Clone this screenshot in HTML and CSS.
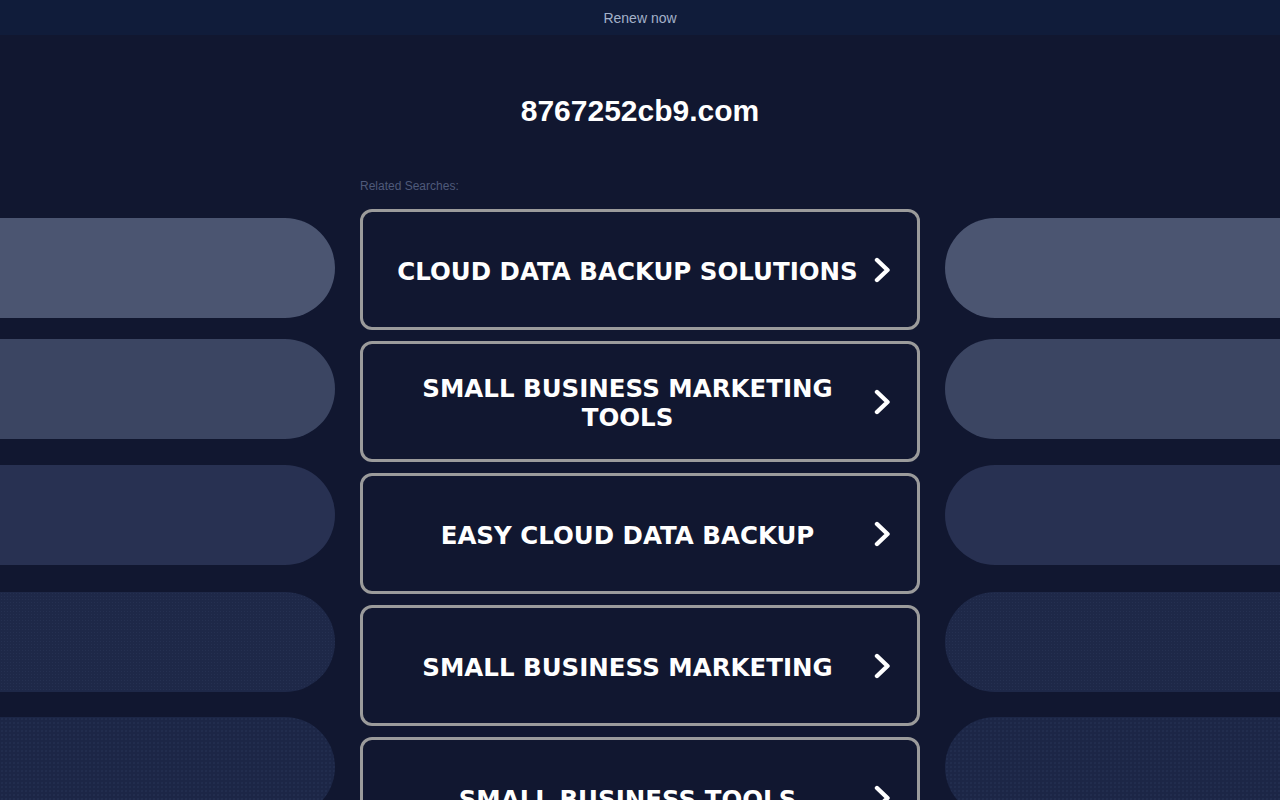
FILE: index.html
```html
<!DOCTYPE html>
<html lang="en">
<head>
<meta charset="utf-8">
<title>8767252cb9.com</title>
<link rel="stylesheet" href="styles.css">
</head>
<body>
<div class="topbar"><a class="renew" href="#">Renew now</a></div>
<h1 class="domain">8767252cb9.com</h1>
<div class="label-row"><span class="label">Related Searches:</span></div>
<div class="layout">
  <div class="side side-left">
    <div class="pill p1"></div>
    <div class="pill p2"></div>
    <div class="pill p3"></div>
    <div class="pill p4"></div>
    <div class="pill p5"></div>
  </div>
  <div class="links">
    <a class="link" href="#"><span class="link-text">CLOUD DATA BACKUP SOLUTIONS</span><svg class="chev" viewBox="0 0 17 26" width="17" height="26"><polyline points="3,3 13.5,13 3,23" fill="none" stroke="#fff" stroke-width="4.4" stroke-linecap="round" stroke-linejoin="round"/></svg></a>
    <a class="link" href="#"><span class="link-text">SMALL BUSINESS MARKETING TOOLS</span><svg class="chev" viewBox="0 0 17 26" width="17" height="26"><polyline points="3,3 13.5,13 3,23" fill="none" stroke="#fff" stroke-width="4.4" stroke-linecap="round" stroke-linejoin="round"/></svg></a>
    <a class="link" href="#"><span class="link-text">EASY CLOUD DATA BACKUP</span><svg class="chev" viewBox="0 0 17 26" width="17" height="26"><polyline points="3,3 13.5,13 3,23" fill="none" stroke="#fff" stroke-width="4.4" stroke-linecap="round" stroke-linejoin="round"/></svg></a>
    <a class="link" href="#"><span class="link-text">SMALL BUSINESS MARKETING</span><svg class="chev" viewBox="0 0 17 26" width="17" height="26"><polyline points="3,3 13.5,13 3,23" fill="none" stroke="#fff" stroke-width="4.4" stroke-linecap="round" stroke-linejoin="round"/></svg></a>
    <a class="link" href="#"><span class="link-text">SMALL BUSINESS TOOLS</span><svg class="chev" viewBox="0 0 17 26" width="17" height="26"><polyline points="3,3 13.5,13 3,23" fill="none" stroke="#fff" stroke-width="4.4" stroke-linecap="round" stroke-linejoin="round"/></svg></a>
  </div>
  <div class="side side-right">
    <div class="pill p1"></div>
    <div class="pill p2"></div>
    <div class="pill p3"></div>
    <div class="pill p4"></div>
    <div class="pill p5"></div>
  </div>
</div>
</body>
</html>
```
FILE: styles.css
```css
html, body {
  margin: 0;
  padding: 0;
}
body {
  background: #111730;
  font-family: "Liberation Sans", Arial, sans-serif;
  color: #fff;
  overflow: hidden;
}
.topbar {
  height: 35px;
  background: #101c3a;
  display: flex;
  align-items: center;
  justify-content: center;
}
.renew {
  color: #a3b1c9;
  font-size: 14px;
  text-decoration: none;
  line-height: 16px;
}
.domain {
  margin: 58px 0 0;
  text-align: center;
  font-size: 30px;
  line-height: 36px;
  font-weight: bold;
  color: #fff;
}
.label-row {
  width: 560px;
  margin: 49px auto 0;
  line-height: 14px;
}
.label {
  font-size: 12px;
  color: #4f5a7a;
}
.layout {
  display: grid;
  grid-template-columns: 1fr 560px 1fr;
  column-gap: 25px;
  margin-top: 16px;
}
.side {
  display: flex;
  flex-direction: column;
  padding-top: 9px;
}
.pill {
  height: 100px;
  flex: none;
}
.side-left .pill { border-radius: 0 50px 50px 0; }
.side-right .pill { border-radius: 50px 0 0 50px; }
.pill.p1 { background: #4b5571; }
.pill.p2 { background: #3b4562; margin-top: 21px; }
.pill.p3 { background: #283152; margin-top: 26px; }
.pill.p4 {
  background-color: #1e2848;
  background-image: radial-gradient(circle, rgba(90, 105, 150, 0.12) 0.6px, transparent 0.9px);
  background-size: 3px 3px;
  margin-top: 27px;
}
.pill.p5 {
  background-color: #1c2646;
  background-image: radial-gradient(circle, rgba(90, 105, 150, 0.14) 0.6px, transparent 0.9px);
  background-size: 4px 4px;
  margin-top: 25px;
}
.links {
  display: flex;
  flex-direction: column;
  gap: 11px;
}
.link {
  box-sizing: border-box;
  height: 121px;
  border: 3px solid #9b9b9b;
  border-radius: 12px;
  display: flex;
  align-items: center;
  padding: 3px 26px 0 24px;
  text-decoration: none;
  color: #fff;
}
.link-text {
  flex: 1;
  text-align: center;
  font-family: "DejaVu Sans", Verdana, sans-serif;
  font-weight: bold;
  font-size: 24.5px;
  line-height: 29px;
}
.chev {
  flex: none;
  margin-left: 6px;
  margin-top: -3px;
  display: block;
}
```
